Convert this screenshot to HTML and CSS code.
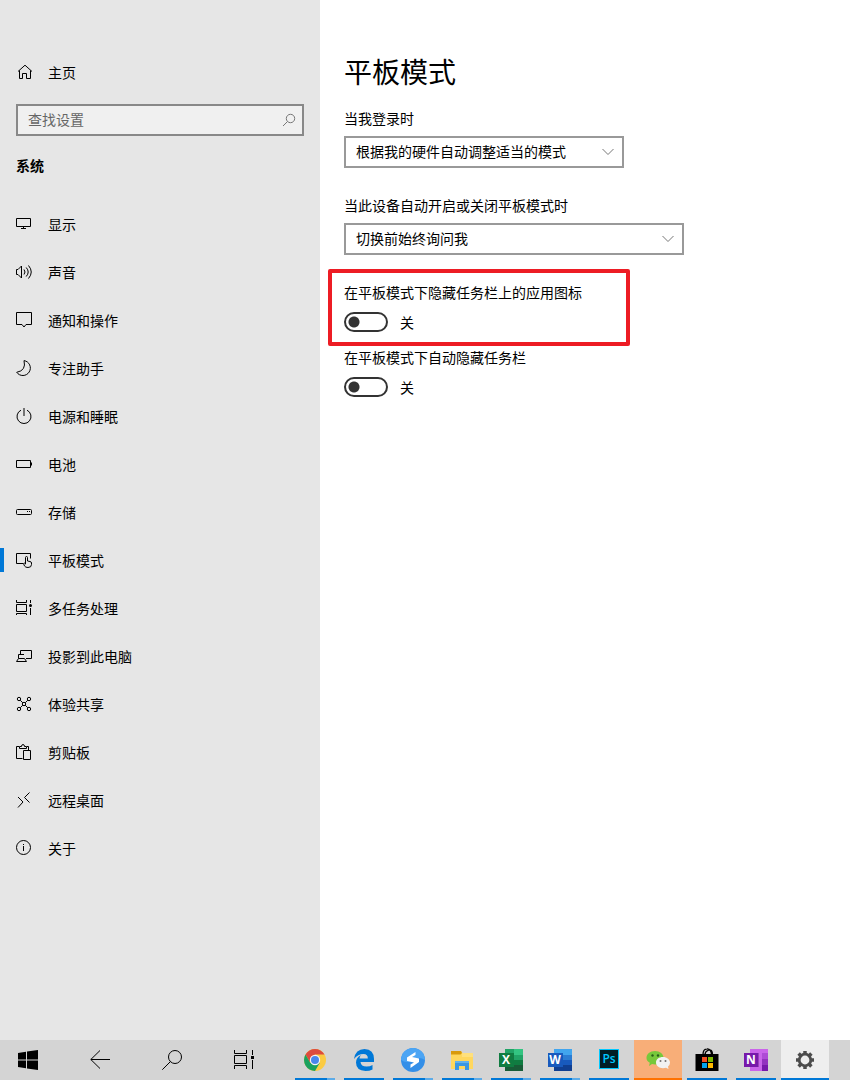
FILE: index.html
```html
<!DOCTYPE html>
<html lang="zh-CN">
<head>
	<meta charset="utf-8">
	<meta name="viewport" content="width=device-width, initial-scale=1">
	<title>设置</title>
	<link rel="stylesheet" href="styles.css">
</head>

<body>
	<div class="window">
		<aside class="sidebar">
			<a class="nav-link home" href="#">
				<svg class="icon" viewBox="0 0 16 16"><path d="M2 7.5 9 1.2l7 6.3M3.5 6.5v8h3v-5h4v5h4v-8"/></svg>
				<span>主页</span>
			</a>

			<div class="search">
				<input type="text" placeholder="查找设置" aria-label="查找设置">
				<button type="button" aria-label="搜索">
					<svg class="icon" viewBox="0 0 16 16"><circle cx="9.5" cy="6.5" r="4.2"/><path d="M6.5 9.5 2 14"/></svg>
				</button>
			</div>

			<h2>系统</h2>

			<nav>
				<a class="nav-link" href="#">
					<svg class="icon" viewBox="0 0 16 16"><path d="M.5 2.5h14v8H.5zM7.5 10.5v2M5 12.5h5"/></svg>
					<span>显示</span>
				</a>
				<a class="nav-link" href="#">
					<svg class="icon" viewBox="0 0 16 16"><path d="M.5 5.5H2L5.5 2v12L2 10.5H.5zM8 5.5q2 2.500 0 5M10.200 3.500q4 4.500 0 9M12.500 1.500q5.500 6.500 0 13"/></svg>
					<span>声音</span>
				</a>
				<a class="nav-link" href="#">
					<svg class="icon" viewBox="0 0 16 16"><path d="M.5.5h15v12H10l-2 2.500-2-2.500H.5z"/></svg>
					<span>通知和操作</span>
				</a>
				<a class="nav-link" href="#">
					<svg class="icon" viewBox="0 0 16 16"><path d="M8 .6A7.500 7.500 0 1 1 .7 12.300Q10.500 10.500 8 .6z"/></svg>
					<span>专注助手</span>
				</a>
				<a class="nav-link" href="#">
					<svg class="icon" viewBox="0 0 16 16"><path d="M8 0v8M5 2.200a7 7 0 1 0 6 0"/></svg>
					<span>电源和睡眠</span>
				</a>
				<a class="nav-link" href="#">
					<svg class="icon" viewBox="0 0 16 16"><path d="M.5 4.500h14v7H.5zM15.500 6.500v3"/></svg>
					<span>电池</span>
				</a>
				<a class="nav-link" href="#">
					<svg class="icon" viewBox="0 0 16 16"><rect x=".5" y="5.500" width="15" height="5" rx="1"/><path d="M11 7.500h1M13 7.500h1"/></svg>
					<span>存储</span>
				</a>
				<a class="nav-link active" href="#" aria-current="page">
					<svg class="icon" viewBox="0 0 16 16"><path d="M7 11.500H.5v-10h14v5M9.500 12V5.500q0-1 1-1t1 1V9l2.500.5q1.500.3 1.500 1.500v1.500q0 3-3.500 3-2.500 0-3.500-1.500l-1-2.500q1-1 2 .5"/></svg>
					<span>平板模式</span>
				</a>
				<a class="nav-link" href="#">
					<svg class="icon" viewBox="0 0 16 16"><path d="M.5 0v2.500h10V0M.5 4.500h10v7H.5zM.5 15v-1.500h10V15M14.500 0v3M14.500 8v7"/><circle class="fill" cx="14.500" cy="5.500" r="1.500"/></svg>
					<span>多任务处理</span>
				</a>
				<a class="nav-link" href="#">
					<svg class="icon" viewBox="0 0 16 16"><path d="M4.500 6.500v-4h11v8H10M2.500 10.500v-4H8M.5 13.500l2-3h6l2 3z"/></svg>
					<span>投影到此电脑</span>
				</a>
				<a class="nav-link" href="#">
					<svg class="icon" viewBox="0 0 16 16"><circle cx="3" cy="3" r="1.700"/><circle cx="13" cy="3" r="1.700"/><circle cx="3" cy="13" r="1.700"/><circle cx="13" cy="13" r="1.700"/><circle cx="8" cy="8" r="1.700"/><path d="m4.200 4.200 2.600 2.600m2.400 2.400 2.600 2.600m0-7.600L9.200 6.800M6.800 9.200l-2.600 2.600"/></svg>
					<span>体验共享</span>
				</a>
				<a class="nav-link" href="#">
					<svg class="icon" viewBox="0 0 16 16"><path d="M6.500 14.500h-6v-12H3M11 2.500h1.500V6M3.500 4.500v-2h2q0-2 1.500-2t1.500 2h2v2zM7.500 6.500h7v9h-7z"/></svg>
					<span>剪贴板</span>
				</a>
				<a class="nav-link" href="#">
					<svg class="icon" viewBox="0 0 16 16"><path d="m2 5 5 5-5 5.500M13.500.5l-5 5 5 5"/></svg>
					<span>远程桌面</span>
				</a>
				<a class="nav-link" href="#">
					<svg class="icon" viewBox="0 0 16 16"><circle cx="7.500" cy="7.500" r="7"/><path d="M7.500 6v5M7.500 4v1"/></svg>
					<span>关于</span>
				</a>
			</nav>
		</aside>

		<main>
			<h1>平板模式</h1>

			<div class="field">
				<label for="signin">当我登录时</label>
				<select id="signin">
					<option>根据我的硬件自动调整适当的模式</option>
				</select>
			</div>

			<div class="field">
				<label for="switching">当此设备自动开启或关闭平板模式时</label>
				<select id="switching" class="wide">
					<option>切换前始终询问我</option>
				</select>
			</div>

			<div class="option marked">
				<label for="hide-icons">在平板模式下隐藏任务栏上的应用图标</label>
				<div class="toggle">
					<input type="checkbox" role="switch" id="hide-icons">
					<span>关</span>
				</div>
			</div>

			<div class="option">
				<label for="hide-taskbar">在平板模式下自动隐藏任务栏</label>
				<div class="toggle">
					<input type="checkbox" role="switch" id="hide-taskbar">
					<span>关</span>
				</div>
			</div>
		</main>
	</div>

	<footer class="taskbar">
		<div class="system">
			<button type="button" class="start" aria-label="开始">
				<svg width="20" height="20" viewBox="0 0 20 20"><path d="M0 3l8-1.200V9.500H0zM9 1.600 20 0v9.500H9zM0 10.500h8v7.800L0 17zM9 10.500h11V20L9 18.500z"/></svg>
			</button>
			<button type="button" aria-label="后退">
				<svg class="line" width="20" height="20" viewBox="0 0 20 20"><path d="M20 9.500H.8M10 .5l-9.200 9 9.200 9"/></svg>
			</button>
			<button type="button" aria-label="搜索">
				<svg class="line" width="20" height="20" viewBox="0 0 20 20"><circle cx="13" cy="7" r="6.500"/><path d="M8.500 11.500.3 19.700"/></svg>
			</button>
			<button type="button" aria-label="任务视图">
				<svg class="line" width="20" height="20" viewBox="0 0 20 20"><path d="M.5 0v3.500h12V0M.5 5.500h12v8H.5zM.5 19v-3.500h12V19M18.500 0v5M18.500 10v9"/><path class="fill" d="M17 6h3v3h-3z"/></svg>
			</button>
		</div>

		<div class="apps">
			<button type="button" class="app multi" aria-label="Chrome">
				<svg width="24" height="24" viewBox="0 0 24 24">
					<circle cx="12" cy="12" r="11" fill="#fbcb43"/>
					<path d="M2.500 6.500A11 11 0 0 1 21.500 6.500H12L7.200 14.800z" fill="#dd4b3e"/>
					<path d="M2.500 6.500A11 11 0 0 0 12 23l4.800-8.200H7.200z" fill="#1aa15f"/>
					<circle cx="12" cy="12" r="5.200" fill="#f5f5f5"/>
					<circle cx="12" cy="12" r="4" fill="#4886ed"/>
				</svg>
			</button>
			<button type="button" class="app" aria-label="Edge">
				<svg width="24" height="24" viewBox="0 0 24 24"><path d="M2 11Q3.500 1 12.500 1 22 1.500 22 11v3H8.500q.5 4.500 6 4.500 3.500 0 6-1.500v4.500Q17.500 23 13.500 23 4 22.500 4 14.500q0-5 5-7.500-1.500 1.500-1.500 3.500h8.300Q16 6 11.500 6 6 6 2 11z" fill="#0078d7"/></svg>
			</button>
			<button type="button" class="app multi" aria-label="飞鸟">
				<svg width="24" height="24" viewBox="0 0 24 24"><circle cx="12" cy="12" r="12" fill="#348fe8"/><path d="M0 12A12 12 0 0 1 24 12q-6-4-12 0T0 12z" fill="#4ca5f4"/><path d="M14.500 4 6 9.500v3.500l7 1.500-3.500 2V20l8.500-6v-3.500l-7-1.500 3.500-2z" fill="#fff"/></svg>
			</button>
			<button type="button" class="app multi" aria-label="文件资源管理器">
				<svg width="24" height="24" viewBox="0 0 24 24"><path d="M1 3h10l2 2.500h10V21H1z" fill="#ffd75e"/><path d="M1 3h10l1 2-1.500 1.500H1z" fill="#d99a0c"/><path d="M12 5h11v4H12z" fill="#ffe07c"/><path d="M5 13h14v9h-4v-4H9v4H5z" fill="#3b97e3"/><path d="M5 13h14v2H5z" fill="#62b2ee"/></svg>
			</button>
			<button type="button" class="app multi" aria-label="Excel">
				<svg width="24" height="24" viewBox="0 0 24 24"><path d="M6 1h18v22H6z" fill="#21a366"/><path d="M15 1h9v6h-9z" fill="#33c481"/><path d="M6 12h9v11H6z" fill="#185c37"/><path d="M15 12h9v5h-9z" fill="#107c41"/><path d="M15 17h9v6h-9z" fill="#185c37"/><path d="M0 5h15v14H0z" fill="#107c41"/><text x="7" y="16">X</text></svg>
			</button>
			<button type="button" class="app multi" aria-label="Word">
				<svg width="24" height="24" viewBox="0 0 24 24"><path d="M6 1h18v6H6z" fill="#41a5ee"/><path d="M6 7h18v5H6z" fill="#2b7cd3"/><path d="M6 12h18v5H6z" fill="#185abd"/><path d="M6 17h18v6H6z" fill="#103f91"/><path d="M0 5h15v14H0z" fill="#185abd"/><text x="7" y="16">W</text></svg>
			</button>
			<button type="button" class="app" aria-label="Photoshop">
				<svg width="24" height="24" viewBox="0 0 24 24"><path d="M2 1h20v20H2z" fill="#00c8ff"/><path d="M3 2h18v18H3z" fill="#001d26"/><text class="ps" x="12" y="15">Ps</text></svg>
			</button>
			<button type="button" class="app alert" aria-label="微信">
				<svg width="24" height="24" viewBox="0 0 24 24"><path d="M9 3c5 0 8.500 3 8.500 7S14 16.500 9 16.500l-3-.5-3 2 .8-3.200Q.5 13 .5 10C.5 6 4 3 9 3z" fill="#77c83b"/><circle cx="6.500" cy="7.500" r="1.200" fill="#286019"/><circle cx="12" cy="7.500" r="1.200" fill="#286019"/><path d="M17 9c4 0 7 2.500 7 5.500q0 2.500-2 4l.5 2.500-2.500-1.300-3 .5c-4 0-7-2.400-7-5.700S13 9 17 9z" fill="#f2f2f2"/><circle cx="14.500" cy="13" r="1" fill="#737373"/><circle cx="19.500" cy="13" r="1" fill="#737373"/></svg>
			</button>
			<button type="button" class="app" aria-label="Microsoft Store">
				<svg width="24" height="24" viewBox="0 0 24 24"><path d="M.5 6h23v17H.5z"/><path d="M8 6.500Q8 1 12 .8 16 .5 16.500 6.500M10 6.500q0-3 3.500-4.500 4-1 4 4.500" fill="none" stroke="#000" stroke-width="1.300"/><path d="M7 9h5v5H7z" fill="#f25022"/><path d="M13 9h5v5h-5z" fill="#7fba00"/><path d="M7 15h5v5H7z" fill="#00a4ef"/><path d="M13 15h5v5h-5z" fill="#ffb900"/></svg>
			</button>
			<button type="button" class="app" aria-label="OneNote">
				<svg width="24" height="24" viewBox="0 0 24 24"><path d="M6 1h18v22H6z" fill="#ca64ea"/><path d="M18 5h6v6h-6z" fill="#ae4bd5"/><path d="M18 11h6v6h-6z" fill="#9332bf"/><path d="M18 17h6v6h-6z" fill="#7719aa"/><path d="M6 5h9v14H6z" fill="#9845ba"/><path d="M0 5h14v14H0z" fill="#7719aa"/><text x="7" y="16">N</text></svg>
			</button>
			<button type="button" class="app current" aria-label="设置">
				<svg width="24" height="24" viewBox="0 0 24 24"><circle cx="12" cy="12" r="5.800" fill="none" stroke="#4c4c4c" stroke-width="2.800"/><path d="M12 3v3M12 18v3M3 12h3M18 12h3M5.600 5.600l2.200 2.200M16.200 16.200l2.200 2.200M5.600 18.400l2.200-2.200M16.200 7.800l2.200-2.200" fill="none" stroke="#4c4c4c" stroke-width="3.500"/></svg>
			</button>
		</div>
	</footer>
</body>
</html>
```

FILE: styles.css
```css
* {
	box-sizing:border-box;
}
body {
	margin:0;
	min-height:100vh;
	display:flex;
	flex-direction:column;
	background-color:#fff;
	color:#000;
	font-family:"Noto Sans CJK SC", sans-serif;
	font-size:14px;
	line-height:20px;
}
button, input, select {
	font:inherit;
	color:inherit;
}
button {
	display:flex;
	align-items:center;
	justify-content:center;
	padding:0;
	border:0;
	background:none;
}
h1 {
	margin:0 0 17px;
	font-size:28px;
	font-weight:normal;
	line-height:40px;
}
h2 {
	margin:19px 16px 25px;
	font-size:14px;
	font-weight:bold;
	line-height:20px;
}
.window {
	flex:1;
	display:flex;
}

/* left column */
.sidebar {
	flex:0 0 320px;
	padding-top:48px;
	background-color:#e6e6e6;
}
.nav-link {
	display:flex;
	align-items:center;
	gap:16px;
	height:48px;
	padding-right:16px;
	padding-left:12px;
	border-left:4px solid transparent;
	color:#000;
	text-decoration:none;
}
.nav-link.active {
	border-image:linear-gradient(transparent 25%, #0078d7 25%, #0078d7 75%, transparent 75%) 0 0 0 4;
}
.icon {
	flex:none;
	width:16px;
	height:16px;
	fill:none;
	stroke:#000;
}
.fill {
	fill:#000;
	stroke:none;
}
.search {
	display:flex;
	height:32px;
	margin:8px 16px 0;
	border:2px solid #888;
	background-color:#f0f0f0;
}
.search input {
	flex:1;
	min-width:0;
	padding:0 10px 3px;
	border:0;
	background:none;
}
.search input::placeholder {
	color:#666;
	opacity:1;
}
.search button {
	width:26px;
}
.search .icon {
	stroke:#777;
}

/* settings page */
main {
	flex:1;
	min-width:0;
	padding:51px 24px 24px;
}
label {
	display:block;
}
.field {
	margin-bottom:27px;
}
select {
	display:block;
	width:280px;
	max-width:100%;
	height:32px;
	margin-top:8px;
	padding:0 36px 2px 10px;
	border:2px solid #999;
	border-radius:0;
	appearance:none;
	background:#fff url("data:image/svg+xml,%3Csvg xmlns='http://www.w3.org/2000/svg' width='12' height='8'%3E%3Cpath d='M.5 1 6 6.500 11.500 1' fill='none' stroke='%23777'/%3E%3C/svg%3E") no-repeat right 8px center;
}
select.wide {
	width:340px;
}
.option {
	margin-top:1px;
}
.option.marked {
	width:fit-content;
	margin:-13px 0 0 -16px;
	padding:9px 44px 10px 12px;
	border:4px solid #ed1c24;
	border-radius:2px;
}
.toggle {
	display:flex;
	align-items:center;
	gap:12px;
	margin-top:10px;
}
.toggle input {
	appearance:none;
	width:44px;
	height:20px;
	margin:0;
	border:2px solid #333;
	border-radius:10px;
	background:radial-gradient(circle at 8px 8px, #333 5px, transparent 6px);
}
.toggle input:checked {
	border-color:#0078d7;
	background:radial-gradient(circle at 32px 8px, #fff 5px, #0078d7 6px);
}

/* taskbar */
.taskbar {
	display:flex;
	gap:11px;
	height:40px;
	background-color:#d4d4d4;
}
.system, .apps {
	display:flex;
}
.system button {
	width:72px;
}
.system .start {
	width:56px;
	margin-right:8px;
}
.line {
	fill:none;
	stroke:#000;
}
.apps {
	gap:1px;
}
.app {
	width:48px;
	background:linear-gradient(#0078d7, #0078d7) no-repeat center bottom / 40px 2px;
}
.app.multi {
	background-image:linear-gradient(to right, #0078d7 80%, #5cabe8 80%);
}
.app.alert {
	background-color:#f8ae78;
	background-image:linear-gradient(#ff7200, #ff7200);
	background-size:100% 2px;
}
.app.current {
	background-color:#eee;
	background-size:100% 2px;
}
.app text {
	fill:#fff;
	font-family:"Open Sans", sans-serif;
	font-size:12px;
	font-weight:bold;
	text-anchor:middle;
}
.app .ps {
	fill:#00c8ff;
	font-weight:600;
}
```
